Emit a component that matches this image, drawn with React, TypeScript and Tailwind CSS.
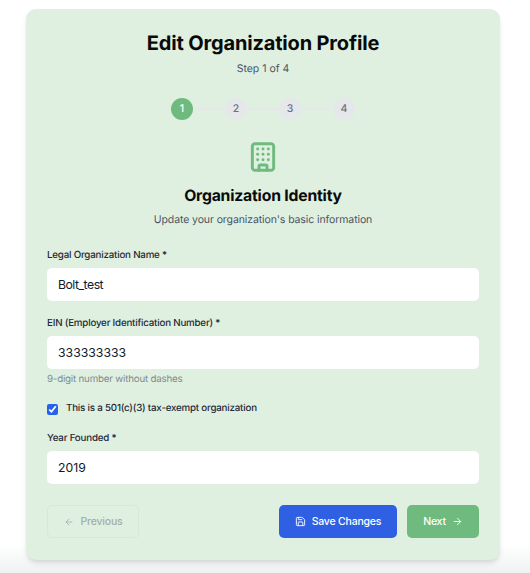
import { Building, Save, ArrowLeft, ArrowRight } from "lucide-react";

const Field = ({ label, value, hint, tight }: { label: string; value: string; hint?: string; tight?: boolean }) => (
  <div className="flex flex-col">
    <label className="text-[9.75px] tracking-[-0.2px] leading-[14px] font-medium text-[#1f2937] mb-[5px]">{label}</label>
    <input
      readOnly
      value={value}
      className={
        tight
          ? "h-[33px] w-full rounded-[5px] bg-white px-[11px] text-[12.25px] tracking-[-0.5px] text-[#111827] outline-none"
          : "h-[33px] w-full rounded-[5px] bg-white px-[11px] text-[12.25px] text-[#111827] outline-none"
      }
    />
    {hint && <p className="mt-[4px] text-[9.75px] tracking-[-0.2px] leading-[14px] text-[#6b7280] opacity-80">{hint}</p>}
  </div>
);

export default function App() {
  return (
    <div className="h-[573px] w-[530px] overflow-hidden bg-gradient-to-b from-white from-[95%] to-[#f0f1f2] pt-[9px] pl-[26px] font-['Inter',sans-serif] [text-rendering:geometricPrecision]">
      <div className="w-[474px] h-[551px] rounded-[10px] bg-[#dff0e0] px-[21px] pt-[21px] shadow-md">
        <h1 className="text-center text-[20px] tracking-[-0.16px] leading-[26px] font-bold text-[#0a0a0a]">Edit Organization Profile</h1>
        <p className="mt-[6px] text-center text-[10.5px] leading-[14px] text-[#4b5563]">Step 1 of 4</p>

        <div className="mt-[22px] flex items-center justify-center">
          <div className="flex h-[22px] w-[22px] items-center justify-center rounded-full bg-[#6fba7f] text-[10.5px] font-medium text-white">1</div>
          {["2", "3", "4"].map((n) => (
            <div key={n} className="flex items-center">
              <div className="h-[2px] w-[32px] bg-[#e5e7eb]" />
              <div className="flex h-[22px] w-[22px] items-center justify-center rounded-full bg-[#e5e7eb] text-[10.5px] font-medium text-[#6b7280]">{n}</div>
            </div>
          ))}
        </div>

        <div className="mt-[21px] flex justify-center">
          <Building size={32} strokeWidth={2.2} className="text-[#6fba7f]" />
        </div>
        <h2 className="mt-[12px] text-center text-[15.75px] tracking-[-0.2px] leading-[21px] font-bold text-[#0a0a0a]">Organization Identity</h2>
        <p className="mt-[5px] text-center text-[10.5px] tracking-[-0.1px] leading-[17px] text-[#4b5563]">Update your organization's basic information</p>

        <div className="mt-[21px] flex flex-col">
          <Field label="Legal Organization Name *" value="Bolt_test" tight />
          <div className="mt-[16px]">
            <Field label="EIN (Employer Identification Number) *" value="333333333" hint="9-digit number without dashes" />
          </div>
          <label className="mt-[15px] flex items-center gap-[8px]">
            <input type="checkbox" readOnly checked className="h-[11px] w-[11px] accent-[#2563eb]" />
            <span className="text-[9.75px] tracking-[-0.2px] leading-[14px] font-medium text-[#1f2937]">This is a 501(c)(3) tax-exempt organization</span>
          </label>
          <div className="mt-[16px]">
            <Field label="Year Founded *" value="2019" />
          </div>
        </div>

        <div className="mt-[21px] flex items-center justify-between">
          <button className="flex h-[33px] w-[92px] items-center justify-center gap-[7px] rounded-[5px] border border-[#d6e8d8] text-[10.5px] tracking-[-0.2px] font-medium text-[#a3aeab]">
            <ArrowLeft size={10} />
            Previous
          </button>
          <div className="flex gap-[10px]">
            <button className="flex h-[33px] w-[118px] items-center justify-center gap-[6px] rounded-[5px] bg-[#2f5fe3] text-[10.5px] tracking-[-0.2px] font-medium text-white">
              <Save size={11} />
              Save Changes
            </button>
            <button className="flex h-[33px] w-[72px] items-center justify-center gap-[6px] rounded-[5px] bg-[#6fba7f] text-[10.5px] tracking-[-0.2px] font-medium text-white">
              Next
              <ArrowRight size={11} />
            </button>
          </div>
        </div>
      </div>
    </div>
  );
}
